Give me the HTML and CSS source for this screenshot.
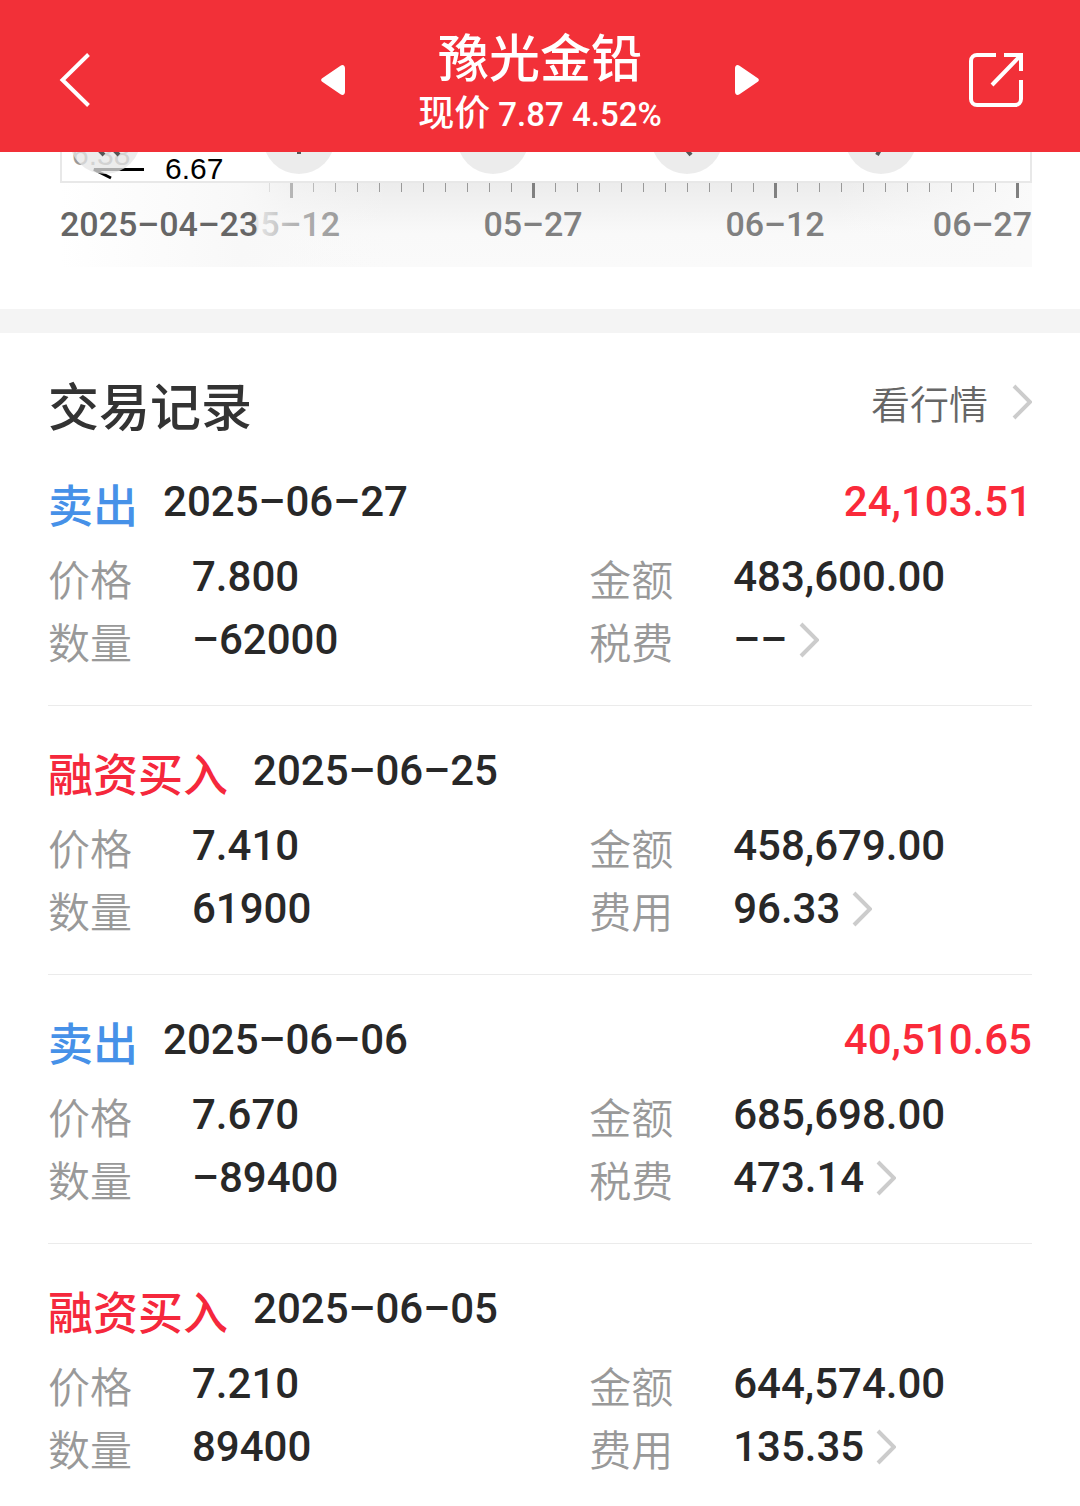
FILE: index.html
```html
<!DOCTYPE html>
<html lang="zh-CN">
<head>
<meta charset="utf-8">
<meta name="viewport" content="width=device-width, initial-scale=1">
<title>豫光金铅</title>
<link rel="stylesheet" href="styles.css">
</head>
<body>
<header class="topbar">
  <button class="icon-btn" aria-label="返回">
    <svg width="36" height="56" viewBox="0 0 36 56" fill="none" stroke="#fff" stroke-width="4"><path d="M31.500 2.500 5.500 28l26 25.500"/></svg>
  </button>
  <div class="switcher">
    <button class="icon-btn" aria-label="上一只">
      <svg width="25" height="30" viewBox="0 0 25 30" fill="#fff"><path d="M1.200 13.200 19.500.700C22 -.700 24 .500 24 3.500v23c0 3-2 4.200-4.500 2.800L1.200 16.800c-1.400-1-1.400-2.600 0-3.600z"/></svg>
    </button>
    <div class="stock">
      <h1 class="stock-name">豫光金铅</h1>
      <p class="stock-price">现价 <span class="stock-num">7.87 4.52%</span></p>
    </div>
    <button class="icon-btn" aria-label="下一只">
      <svg width="25" height="30" viewBox="0 0 25 30" fill="#fff"><path d="M23.800 13.200 5.500.700C3 -.700 1 .500 1 3.500v23c0 3 2 4.200 4.500 2.800l18.300-12.500c1.400-1 1.400-2.600 0-3.600z"/></svg>
    </button>
  </div>
  <button class="icon-btn icon-btn-end" aria-label="分享">
    <svg width="54" height="54" viewBox="0 0 54 54" fill="none" stroke="#fff" stroke-width="4"><path d="M27 2H8a6 6 0 0 0-6 6v38a6 6 0 0 0 6 6h38a6 6 0 0 0 6-6V27M35 2h17v16M52 2 23 32"/></svg>
  </button>
</header>

<main>
  <section class="chart" aria-label="走势图">
    <svg class="chart-svg" viewBox="0 0 972 115">
      <defs>
        <linearGradient id="band" x1="0" y1="0" x2="0" y2="1">
          <stop offset="0" stop-color="#ececec"/><stop offset=".6" stop-color="#f9f9f9"/><stop offset="1" stop-color="#fafafa"/>
        </linearGradient>
        <linearGradient id="fadeL" x1="0" y1="0" x2="1" y2="0">
          <stop offset="0" stop-color="#fff"/><stop offset=".55" stop-color="#f8f8f8"/><stop offset=".6" stop-color="#f8f8f8" stop-opacity=".85"/><stop offset=".7" stop-color="#f8f8f8" stop-opacity=".45"/><stop offset="1" stop-color="#f8f8f8" stop-opacity="0"/>
        </linearGradient>
        <linearGradient id="fadeR" x1="0" y1="0" x2="1" y2="0">
          <stop offset="0" stop-color="#fafafa" stop-opacity="0"/><stop offset="1" stop-color="#fafafa"/>
        </linearGradient>
      </defs>
      <rect y="31" width="972" height="84" fill="url(#band)"/>
      <rect x="772" y="31" width="200" height="84" fill="url(#fadeR)"/>
      <path class="minor" d="M209.500 31v9M253.500 31v9M275.500 31v9M297.500 31v9M319.500 31v9M341.500 31v9M363.500 31v9M385.500 31v9M407.500 31v9M429.500 31v9M451.500 31v9M495.500 31v9M517.500 31v9M539.500 31v9M561.500 31v9M583.500 31v9M605.500 31v9M627.500 31v9M649.500 31v9M671.500 31v9M693.500 31v9M737.500 31v9M759.500 31v9M781.500 31v9M803.500 31v9M825.500 31v9M847.500 31v9M869.500 31v9M891.500 31v9M913.500 31v9M935.500 31v9"/>
      <path class="major" d="M231.500 31v15M473.500 31v15M715.500 31v15M957.500 31v15"/>
      <text class="tick" x="280" y="84" text-anchor="end">05–12</text>
      <text class="tick" x="473" y="84" text-anchor="middle">05–27</text>
      <text class="tick" x="715" y="84" text-anchor="middle">06–12</text>
      <text class="tick" x="972" y="84" text-anchor="end">06–27</text>
      <rect y="31" width="330" height="84" fill="url(#fadeL)"/>
      <text class="tick tick-start" x="0" y="84">2025–04–23</text>
      <path class="frame" d="M1 0v30h970V0"/>
      <text class="low low-under" x="12" y="13">6.38</text>
      <path class="arrow" d="M84 17.500H34l17 8.500"/>
      <text class="low" x="105" y="27">6.67</text>
      <g class="knob">
        <circle cx="45" cy="-14" r="36"/><circle cx="239" cy="-14" r="36"/><circle cx="433" cy="-14" r="36"/><circle cx="627" cy="-14" r="36"/><circle cx="821" cy="-14" r="36"/>
      </g>
      <path class="knob-mark" d="M39-2l5 5M54-2l5 5M239-2v4M625-4l6 7M821-4l-4 7"/>
    </svg>
  </section>

  <section class="records">
    <div class="records-head">
      <h2 class="records-title">交易记录</h2>
      <a class="quote-link" href="#">看行情
        <svg class="chev" viewBox="0 0 20 36"><path d="M2 2l16 16L2 34"/></svg>
      </a>
    </div>

    <article class="record">
      <div class="record-head"><h3 class="side sell">卖出</h3><time class="num">2025–06–27</time><span class="num profit">24,103.51</span></div>
      <dl class="facts">
        <div class="fact"><dt>价格</dt><dd class="num">7.800</dd></div>
        <div class="fact"><dt>金额</dt><dd class="num">483,600.00</dd></div>
        <div class="fact"><dt>数量</dt><dd class="num">–62000</dd></div>
        <div class="fact"><dt>税费</dt><dd class="num"><a class="fee" href="#">––<svg class="chev" viewBox="0 0 20 36"><path d="M2 2l16 16L2 34"/></svg></a></dd></div>
      </dl>
    </article>

    <article class="record">
      <div class="record-head"><h3 class="side buy">融资买入</h3><time class="num">2025–06–25</time></div>
      <dl class="facts">
        <div class="fact"><dt>价格</dt><dd class="num">7.410</dd></div>
        <div class="fact"><dt>金额</dt><dd class="num">458,679.00</dd></div>
        <div class="fact"><dt>数量</dt><dd class="num">61900</dd></div>
        <div class="fact"><dt>费用</dt><dd class="num"><a class="fee" href="#">96.33<svg class="chev" viewBox="0 0 20 36"><path d="M2 2l16 16L2 34"/></svg></a></dd></div>
      </dl>
    </article>

    <article class="record">
      <div class="record-head"><h3 class="side sell">卖出</h3><time class="num">2025–06–06</time><span class="num profit">40,510.65</span></div>
      <dl class="facts">
        <div class="fact"><dt>价格</dt><dd class="num">7.670</dd></div>
        <div class="fact"><dt>金额</dt><dd class="num">685,698.00</dd></div>
        <div class="fact"><dt>数量</dt><dd class="num">–89400</dd></div>
        <div class="fact"><dt>税费</dt><dd class="num"><a class="fee" href="#">473.14<svg class="chev" viewBox="0 0 20 36"><path d="M2 2l16 16L2 34"/></svg></a></dd></div>
      </dl>
    </article>

    <article class="record">
      <div class="record-head"><h3 class="side buy">融资买入</h3><time class="num">2025–06–05</time></div>
      <dl class="facts">
        <div class="fact"><dt>价格</dt><dd class="num">7.210</dd></div>
        <div class="fact"><dt>金额</dt><dd class="num">644,574.00</dd></div>
        <div class="fact"><dt>数量</dt><dd class="num">89400</dd></div>
        <div class="fact"><dt>费用</dt><dd class="num"><a class="fee" href="#">135.35<svg class="chev" viewBox="0 0 20 36"><path d="M2 2l16 16L2 34"/></svg></a></dd></div>
      </dl>
    </article>
  </section>
</main>
</body>
</html>
```
FILE: styles.css
```css
* { box-sizing: border-box; }

body {
  margin: 0;
  background: #fff;
  color: #282828;
  font-family: "Noto Sans CJK SC", sans-serif;
}

h1, h2, h3, p, dl, dd { margin: 0; }
a { color: inherit; text-decoration: none; }
svg { display: block; flex: none; }

.topbar {
  display: grid;
  grid-template-columns: 1fr auto 1fr;
  align-items: center;
  height: 152px;
  padding: 8px 57px 0;
  background: #f23038;
  color: #fff;
}

.icon-btn {
  justify-self: start;
  padding: 0;
  border: 0;
  background: none;
  cursor: pointer;
}
.icon-btn-end { justify-self: end; }

.switcher {
  display: flex;
  align-items: center;
  justify-content: space-between;
  width: 438px;
}

.stock { padding-top: 3px; text-align: center; }
.stock-name { font-size: 51px; line-height: 62px; font-weight: 500; }
.stock-price { font-size: 36px; line-height: 48px; font-weight: 500; }
.stock-num { font-family: Roboto, sans-serif; font-size: 33px; }

.chart {
  padding: 0 48px 42px 60px;
  border-bottom: 24px solid #f4f4f4;
}
.chart-svg { width: 100%; overflow: hidden; }
.frame { fill: none; stroke: #e8e8e8; stroke-width: 2; }
.minor { stroke: #999; stroke-width: 1; }
.major { stroke: #808080; stroke-width: 3; }
.tick { font: 500 34px Roboto, sans-serif; fill: #808080; }
.tick-start { fill: #666; }
.low { font: 400 30px "Liberation Sans", sans-serif; fill: #000; }
.low-under { fill: #999; }
.arrow { fill: none; stroke: #000; stroke-width: 3; }
.knob { fill: #e6e6e6; fill-opacity: .75; }
.knob-mark { fill: none; stroke: #555; stroke-width: 4; }

.records { padding: 0 48px; }
.records-head {
  display: flex;
  align-items: center;
  justify-content: space-between;
  height: 104px;
  padding-top: 34px;
}
.records-title { padding-top: 3px; font-size: 51px; line-height: 60px; font-weight: 500; color: #333; }
.quote-link {
  display: flex;
  align-items: center;
  gap: 24px;
  font-size: 39px;
  line-height: 60px;
  font-weight: 350;
  color: #666;
}

.chev { width: 20px; height: 36px; fill: none; stroke: #ccc; stroke-width: 4; }

.record { padding: 35px 0 34px; border-bottom: 1px solid #ebebeb; }
.record:last-child { border-bottom: 0; }
.record-head {
  display: flex;
  align-items: center;
  gap: 25px;
  height: 60px;
  margin-bottom: 13px;
}
.side { padding-top: 3px; font-size: 45px; line-height: 60px; font-weight: 500; }
.sell { color: #4691e8; }
.buy { color: #f5283c; }

.num { font-family: Roboto, sans-serif; font-size: 42px; line-height: 60px; font-weight: 500; }
.profit { margin-left: auto; color: #fa2a3a; }

.facts { display: grid; grid-template-columns: 55fr 45fr; }
.fact { display: flex; align-items: center; height: 63px; }
.fact dt { width: 144px; padding-top: 3px; font-size: 42px; line-height: 60px; font-weight: 350; color: #999; }
.fee { display: flex; align-items: center; gap: 12px; }
```
